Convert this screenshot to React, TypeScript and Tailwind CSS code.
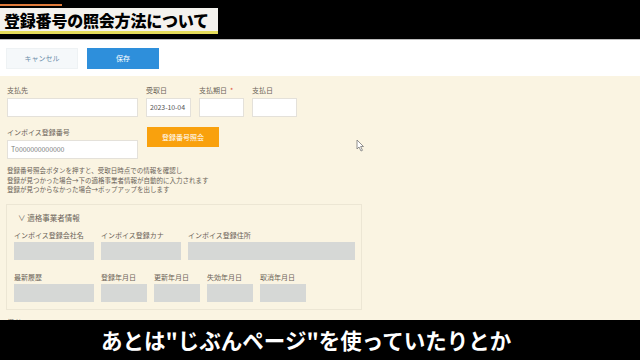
import React from "react";

const jp = { fontFamily: '"Noto Sans CJK JP", "Noto Sans", sans-serif' };

function Label({ children, req }: { children: React.ReactNode; req?: boolean }) {
  return (
    <p className="h-[10px] whitespace-nowrap text-[7px] leading-[10px] text-[#6b6358]">
      {children}
      {req && <span className="ml-[3px] text-[#e0533b]">*</span>}
    </p>
  );
}

function Field({ w, value, placeholder }: { w: string; value?: string; placeholder?: string }) {
  return (
    <div className={`${w} flex h-[19px] items-center overflow-hidden whitespace-nowrap border border-[#e4e1da] bg-white px-[3px] text-[7px] tracking-[-0.1px] text-[#555]`}>
      {value ?? <span className="text-[#7d7d7d]">{placeholder}</span>}
    </div>
  );
}

function Gray({ w }: { w: string }) {
  return <div className={`${w} h-[18px] bg-[#d6d8d6]`} />;
}

export default function App() {
  return (
    <div className="relative h-[360px] w-[640px] overflow-hidden bg-[#faf4e2]" style={jp}>
      {/* title bar */}
      <div className="relative h-[39px] bg-black">
        <div className="absolute left-0 top-[4px] h-[2px] w-[62px] bg-[#e07a3a]" />
        <div className="absolute left-0 top-[8px] flex h-[26px] w-[218px] items-center border-b-[3px] border-[#e6dc5a] bg-[#f4f2ee] pl-[4px]">
          <span className="text-[16px] font-black leading-none tracking-[-0.2px] text-black">登録番号の照会方法について</span>
        </div>
      </div>
      <div className="h-[1px] bg-[#bdbdbd]" />

      {/* action bar */}
      <div className="flex h-[36px] items-center gap-[9px] bg-white px-[6px]">
        <button className="h-[21px] w-[72px] border border-[#eef2f4] bg-[#f5f8fa] text-[7px] text-[#6a8ca8]">キャンセル</button>
        <button className="h-[21px] w-[72px] bg-[#2e8fdb] text-[7px] text-white">保存</button>
      </div>

      {/* form */}
      <div className="px-[7px] pt-[9px]">
        <div className="flex gap-[8px]">
          <div className="flex flex-col gap-[3px]">
            <Label>支払先</Label>
            <Field w="w-[131px]" value="" />
          </div>
          <div className="flex flex-col gap-[3px]">
            <Label>受取日</Label>
            <Field w="w-[45px]" value="2023-10-04" />
          </div>
          <div className="flex flex-col gap-[3px]">
            <Label req>支払期日</Label>
            <Field w="w-[45px]" value="" />
          </div>
          <div className="flex flex-col gap-[3px]">
            <Label>支払日</Label>
            <Field w="w-[45px]" value="" />
          </div>
        </div>

        <div className="mt-[10px] flex gap-[9px]">
          <div className="flex flex-col gap-[3px]">
            <Label>インボイス登録番号</Label>
            <Field w="w-[131px]" placeholder="T0000000000000" />
          </div>
          <button className="h-[20px] w-[72px] bg-[#f9a10d] text-[7px] text-white">登録番号照会</button>
        </div>

        <div className="mt-[7px] text-[6.5px] leading-[9.5px] text-[#6b6358]">
          <p>登録番号照会ボタンを押すと、受取日時点での情報を確認し</p>
          <p>登録が見つかった場合→下の適格事業者情報が自動的に入力されます</p>
          <p>登録が見つからなかった場合→ポップアップを出します</p>
        </div>

        <div className="mt-[9px] w-[356px] -ml-[1px] border border-[#ece6d4] px-[7px] pb-[7px] pt-[8px]">
          <p className="pl-[4px] text-[7.5px] leading-[10px] text-[#6b6358]">∨ 適格事業者情報</p>
          <div className="mt-[7px] flex gap-[7px]">
            <div className="flex flex-col gap-[2px]">
              <Label>インボイス登録会社名</Label>
              <Gray w="w-[80px]" />
            </div>
            <div className="flex flex-col gap-[2px]">
              <Label>インボイス登録カナ</Label>
              <Gray w="w-[80px]" />
            </div>
            <div className="flex flex-col gap-[2px]">
              <Label>インボイス登録住所</Label>
              <Gray w="w-[167px]" />
            </div>
          </div>
          <div className="mt-[12px] flex gap-[7px]">
            <div className="flex flex-col gap-[2px]">
              <Label>最新履歴</Label>
              <Gray w="w-[80px]" />
            </div>
            <div className="flex flex-col gap-[2px]">
              <Label>登録年月日</Label>
              <Gray w="w-[46px]" />
            </div>
            <div className="flex flex-col gap-[2px]">
              <Label>更新年月日</Label>
              <Gray w="w-[46px]" />
            </div>
            <div className="flex flex-col gap-[2px]">
              <Label>失効年月日</Label>
              <Gray w="w-[46px]" />
            </div>
            <div className="flex flex-col gap-[2px]">
              <Label>取消年月日</Label>
              <Gray w="w-[46px]" />
            </div>
          </div>
        </div>
        <p className="mt-[9px] text-[7px] leading-[6px] text-[#8a8478]">備考</p>
      </div>

      {/* cursor */}
      <svg className="absolute left-[356px] top-[139px]" width="9" height="13" viewBox="0 0 9 13">
        <path d="M1 1 L1 10 L3 8 L5 12 L6.5 11.3 L4.6 7.5 L7.5 7.5 Z" fill="#fff" stroke="#777" strokeWidth="0.8" />
      </svg>

      {/* subtitle */}
      <div className="absolute bottom-0 left-0 flex h-[40px] w-[640px] items-center bg-black pl-[101px]">
        <span className="text-[21.5px] font-bold leading-none text-white">あとは"じぶんページ"を使っていたりとか</span>
      </div>
    </div>
  );
}
